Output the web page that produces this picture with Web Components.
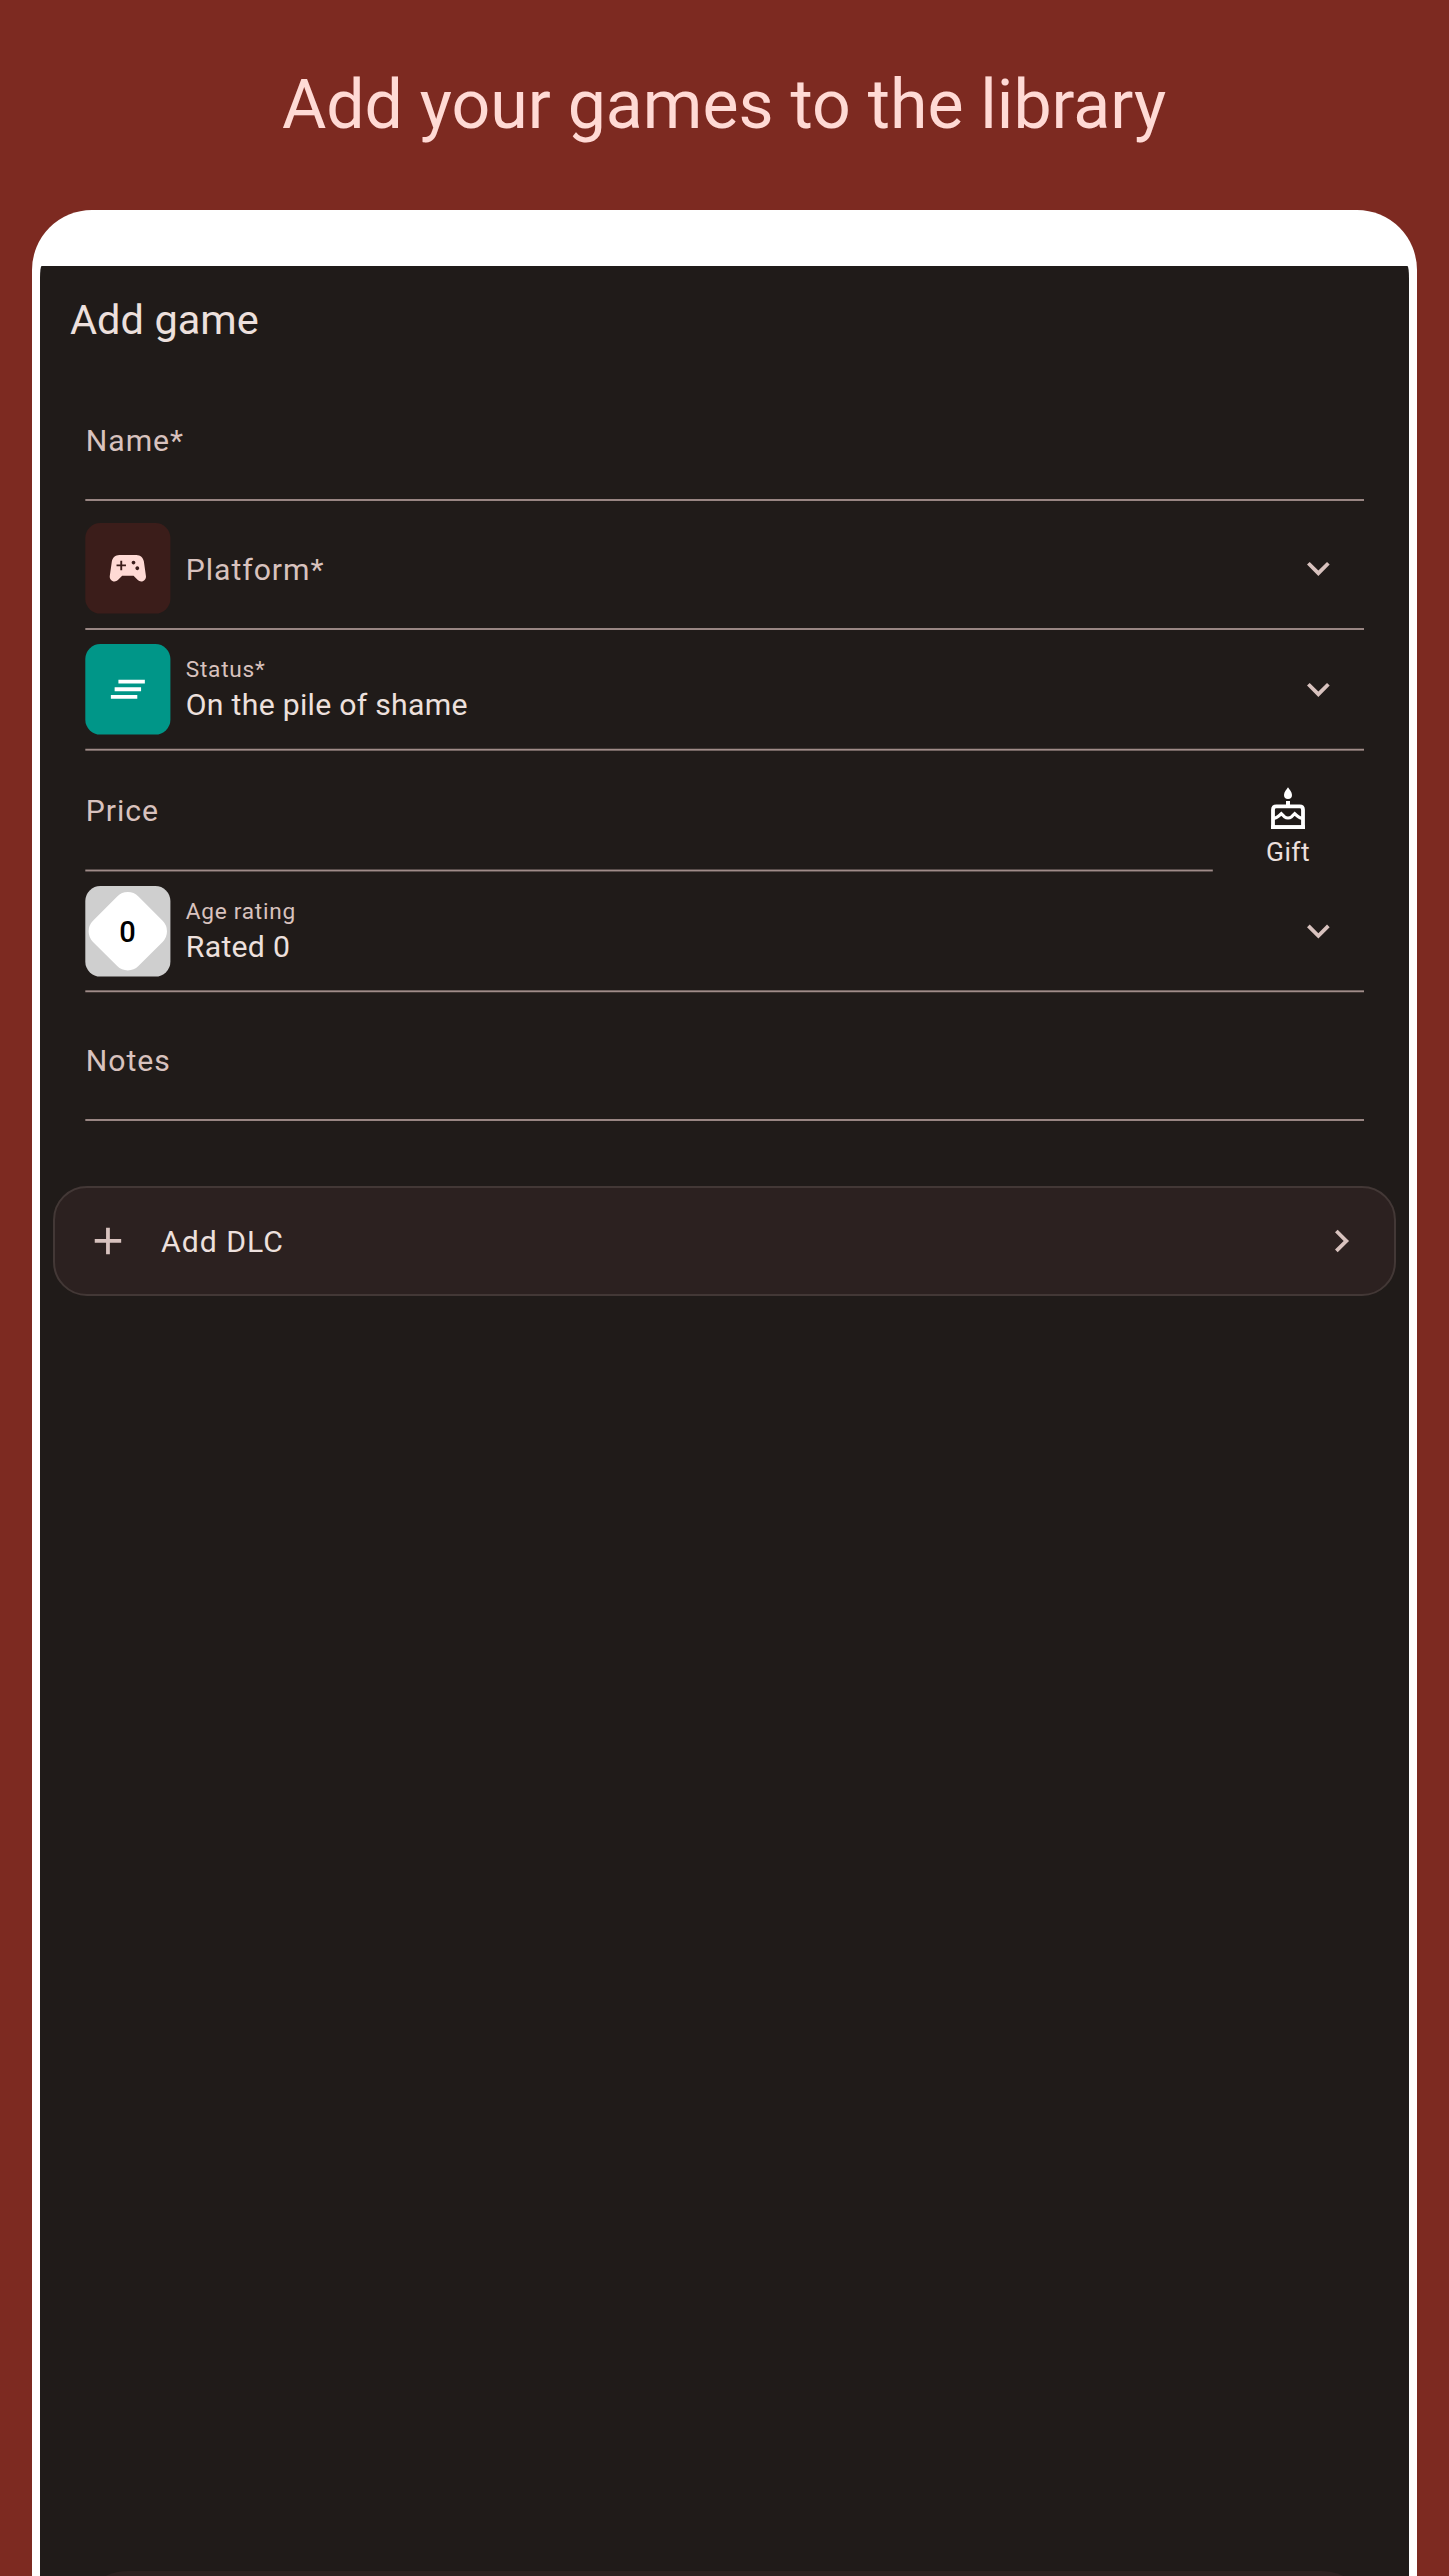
<!DOCTYPE html>
<html lang="en">
<head>
<meta charset="utf-8">
<title>Add game</title>
<style>
html,body{margin:0;padding:0;background:#7d2a21}
body{width:1449px;height:2576px;overflow:hidden;font-family:Roboto,sans-serif}
</style>
</head>
<body>
<promo-page heading="Add your games to the library">
  <game-form></game-form>
</promo-page>
<script>
const ICONS = {
  gamepad: 'M21.58 16.09l-1.09-7.66C20.21 6.46 18.52 5 16.53 5H7.47C5.48 5 3.79 6.46 3.51 8.43l-1.09 7.66C2.2 17.63 3.39 19 4.94 19c.68 0 1.32-.27 1.8-.75L9 16h6l2.25 2.25c.48.48 1.13.75 1.8.75 1.56 0 2.75-1.37 2.53-2.91zM11 11H9v2H8v-2H6v-1h2V8h1v2h2v1zm4-1c-.55 0-1-.45-1-1s.45-1 1-1 1 .45 1 1-.45 1-1 1zm2 3c-.55 0-1-.45-1-1s.45-1 1-1 1 .45 1 1-.45 1-1 1z',
  pile: 'M5 13h14v-2H5v2zm-2 4h14v-2H3v2zM7 7v2h14V7H7z',
  down: 'M16.59 8.59L12 13.17 7.41 8.59 6 10l6 6 6-6z',
  right: 'M10 6L8.59 7.41 13.17 12l-4.58 4.59L10 18l6-6z',
  plus: 'M19 13h-6v6h-2v-6H5v-2h6V5h2v6h6v2z'
};
function define(name, render) {
  customElements.define(name, class extends HTMLElement {
    connectedCallback() {
      if (this.shadowRoot) return;
      this.attachShadow({ mode: 'open' }).innerHTML = render(this);
    }
  });
}
const attr = (el, name, fallback = '') => el.getAttribute(name) ?? fallback;

// 24-unit glyph inside a 48px box
define('app-icon', el => `
<style>:host{display:block;width:48px;height:48px;flex:none}svg{display:block}</style>
<svg width="48" height="48"><path fill="currentColor" transform="translate(${attr(el, 'dx', '1.34')} ${attr(el, 'dy', '1.34')}) scale(1.888)" d="${ICONS[attr(el, 'name')]}"/></svg>`);

// Rounded tile at the start of a picker row
define('icon-tile', el => {
  const y = +attr(el, 'y', '0');
  const kind = attr(el, 'kind');
  const inner = kind === 'rating'
    ? `<rect x="-32.1" y="-32.1" width="64.2" height="64.2" rx="15" fill="#fff" transform="translate(42.8 ${y + 45.3}) rotate(45)"/>
       <text x="42.6" y="${y + 55.6}" text-anchor="middle" font-size="29" font-weight="500" fill="#000">0</text>`
    : `<path fill="${attr(el, 'ink')}" transform="translate(20.2 ${y + 22.6}) scale(1.888)" d="${ICONS[kind]}"/>`;
  return `
<style>:host{display:block;width:86px;height:92px;flex:none}svg{display:block}text{font-family:Roboto,sans-serif}</style>
<svg width="86" height="92"><rect x=".3" y="${y}" width="85.1" height="90.6" rx="15.1" fill="${attr(el, 'fill')}"/>${inner}</svg>`;
});

// One form row, closed by a thin rule
define('form-field', el => `
<style>
:host{display:flex;flex-direction:column;box-sizing:border-box;flex:none}
.row{display:flex;flex:1;min-height:0}
.texts{flex:1;display:flex;flex-direction:column;gap:1px;padding-top:${attr(el, 'pad', '48')}px;padding-left:.8px}
.lead{padding-top:${attr(el, 'lead-pad', '13')}px}
.lead:has(+.texts){margin-right:${el.querySelector('[slot=lead]') ? 14 : 0}px}
.label{font-size:30.2px;line-height:40px;letter-spacing:.94px;color:#d8c2be;white-space:nowrap}
.small{font-size:22.66px;line-height:28px;letter-spacing:.72px}
.value{font-size:30.2px;line-height:40px;letter-spacing:.28px;color:#ede0dd;white-space:nowrap}
.trail{padding-top:${attr(el, 'trail-pad', '43')}px;margin-right:21px;color:#d8c2be}
.trail.none{display:none}
svg{display:block;width:100%;height:4px;flex:none}
</style>
<div class="row">
  <div class="lead"><slot name="lead"></slot></div>
  <div class="texts"><div class="label ${el.hasAttribute('value') ? 'small' : ''}">${attr(el, 'label')}</div>
  ${el.hasAttribute('value') ? `<div class="value">${attr(el, 'value')}</div>` : ''}</div>
  <div class="trail ${el.hasAttribute('picker') ? '' : 'none'}"><app-icon name="down" dx=".7" dy="${attr(el, 'arrow-dy', '.7')}"></app-icon></div>
</div>
<svg><rect x=".3" y="${+attr(el, 'rule', '2') - .95}" width="100%" height="1.9" fill="#a08c89"/></svg>`);

define('gift-button', () => `
<style>
:host{display:flex;flex-direction:column;align-items:center;width:100px;padding-top:34px;box-sizing:border-box}
svg{display:block}
span{font-size:26.4px;line-height:34px;letter-spacing:.45px;color:#ede0dd;margin-top:5px}
</style>
<svg width="36" height="44" viewBox="210 918 108 132">
  <path fill="#fff" d="M264 922C268 929 276 936 276 945A12 12 0 0 1 252 945C252 936 260 929 264 922ZM258 963H270V976H258Z"/>
  <path fill="none" stroke="#fff" stroke-width="11.4" d="M219 1041.3V989Q219 979 229 979H299Q309 979 309 989V1041.3Z" stroke-linejoin="round"/>
  <path fill="#fff" d="M213 1036H315V1047H213Z"/>
  <path fill="none" stroke="#fff" stroke-width="9.5" d="M222 1014.500C229 1015 233 1012 244 1001L253 1010Q264 1018 275 1010L284 1001C295 1012 299 1015 306 1014.500"/>
</svg>
<span>Gift</span>`);

define('dlc-card', () => `
<style>
:host{display:flex;align-items:center;box-sizing:border-box;width:1343px;height:110px;margin:0 0 0 13px;border:2px solid #433836;border-radius:34px;background:#2c2120;padding:0 28px 0 29px;color:#d8c2be;flex:none}
span{flex:1;margin-left:29px;padding-top:2px;font-size:30.2px;line-height:40px;letter-spacing:.98px;color:#ede0dd}
</style>
<app-icon name="plus" dx="1.3" dy="1.3"></app-icon><span>Add DLC</span><app-icon name="right" dx=".8" dy="1.3"></app-icon>`);

define('game-form', () => `
<style>
:host{display:flex;flex-direction:column;height:2310px;background:#201b19;overflow:hidden;border-radius:1.5px 1.5px 0 0 / 12px 12px 0 0}
h2{margin:0;height:107px;box-sizing:border-box;padding:27px 0 0 30px;font-size:41.5px;line-height:54px;font-weight:400;letter-spacing:.05px;color:#ede0dd}
.fields{display:flex;flex-direction:column;margin:0 45px 64px}
.split{display:flex}
.split form-field{width:1127.5px}
.split gift-button{margin-left:25.5px}
.tall{height:129px}.std{height:121px}.last{height:128px}
.sheet{margin:auto 35px 0;height:5px;overflow:hidden;flex:none}
.sheet div{height:120px;border-radius:53px;background:#2c2120}
</style>
<h2>Add game</h2>
<div class="fields">
  <form-field class="tall" label="Name*"></form-field>
  <form-field class="tall" label="Platform*" picker lead-pad="21"><icon-tile slot="lead" kind="gamepad" fill="#3b1d1a" ink="#ffdad5"></icon-tile></form-field>
  <form-field class="std" label="Status*" value="On the pile of shame" picker pad="25" trail-pad="35" rule="1.7"><icon-tile slot="lead" kind="pile" fill="#009688" ink="#fff"></icon-tile></form-field>
  <div class="split">
    <form-field class="std" label="Price" pad="39" rule="1.5"></form-field>
    <gift-button></gift-button>
  </div>
  <form-field class="std" label="Age rating" value="Rated 0" picker pad="25" trail-pad="35" arrow-dy=".4" rule="1.3"><icon-tile slot="lead" kind="rating" fill="#cfcfcf"></icon-tile></form-field>
  <form-field class="last" label="Notes" pad="47"></form-field>
</div>
<dlc-card></dlc-card>
<div class="sheet"><div></div></div>`);

define('promo-page', el => `
<style>
:host{display:flex;flex-direction:column;width:1449px;height:2576px;background:#7d2a21;overflow:hidden}
h1{margin:0;height:210px;box-sizing:border-box;padding:65px 1px 0 0;text-align:center;font-size:68px;line-height:80px;font-weight:400;color:#ffdad5;flex:none}
.device{margin:0 32px;height:2366px;box-sizing:border-box;padding:56px 8px 0;background:#fff;border-radius:60px 60px 0 0;flex:none}
</style>
<h1>${attr(el, 'heading')}</h1>
<div class="device"><slot></slot></div>`);
</script>
</body>
</html>
